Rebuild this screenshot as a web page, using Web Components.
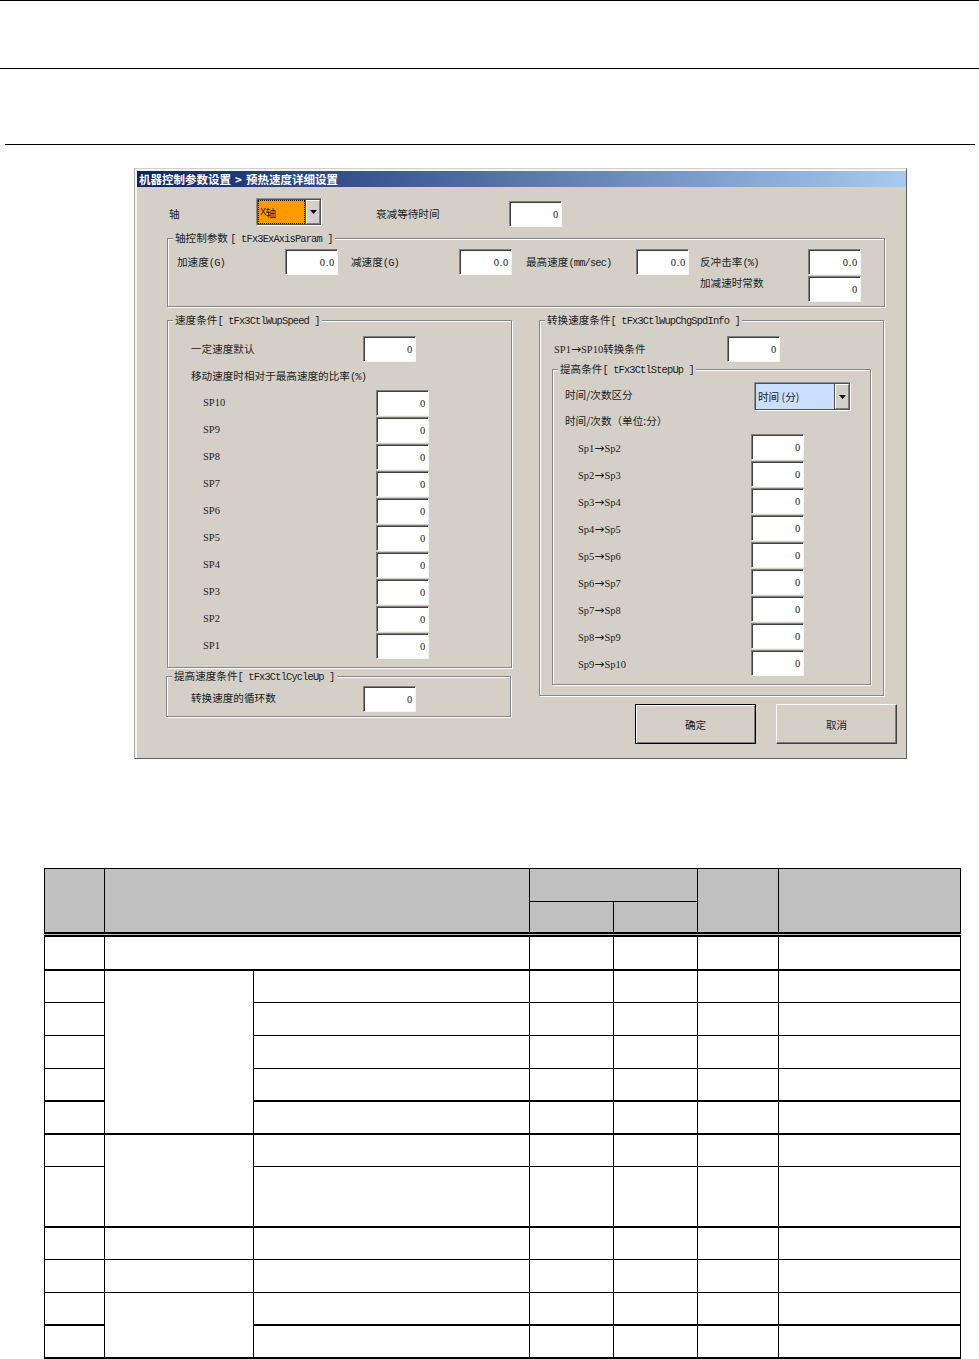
<!DOCTYPE html>
<html lang="zh">
<head>
<meta charset="utf-8">
<title>预热速度详细设置</title>
<style>
    html, body{ margin: 0; padding: 0; background: #fff; }
</style>
</head>
<body>
<manual-page></manual-page>
<script>
class LatText extends HTMLElement{
    constructor(){
        super();
        const shadow = this.attachShadow({ mode: 'open' });
        shadow.innerHTML = `<style>
        :host{ display: inline; font: 10.4px "Liberation Mono", "Noto Sans CJK SC", monospace; letter-spacing: -0.85px; }
        :host([serif]){ font: 10.5px "Liberation Serif", "Noto Sans CJK SC", serif; letter-spacing: 0; }
        :host([arrow]){ font: 12px/1 "DejaVu Sans", sans-serif; letter-spacing: 0; }
        </style><slot></slot>`
    }
}

class NumField extends HTMLElement{
    constructor(){
        super();
        const shadow = this.attachShadow({ mode: 'open' });
        shadow.innerHTML = `
        <style>
        :host{
            display: block;
            box-sizing: border-box;
            flex: none;
            width: 53px;
            height: 26px;
            padding: 7px 2px 0 0;
            background: #fff;
            border: 1px solid;
            border-color: #808080 #f4f4f4 #f4f4f4 #808080;
            box-shadow: inset 1px 1px 0 #404040;
            color: #222;
            text-align: right;
            font: 10.5px/12px "Liberation Serif", serif;
            letter-spacing: 0.7px;
        }
        </style>
        <span id="v"></span>
        `
    }
    connectedCallback(){
        this.shadowRoot.getElementById("v").textContent = this.getAttribute("value") || "0";
    }
}

class NumRow extends HTMLElement{
    constructor(){
        super();
        const shadow = this.attachShadow({ mode: 'open' });
        shadow.innerHTML = `
        <style>
        :host{
            display: flex;
            align-items: center;
            height: 26px;
            margin-bottom: 1px;
        }
        .label{
            flex: none;
            box-sizing: border-box;
            width: var(--label-w, 173px);
            padding-bottom: var(--label-pb, 2px);
        }
        </style>
        <div class="label"><slot></slot></div>
        <num-field></num-field>
        `
    }
    connectedCallback(){
        this.shadowRoot.querySelector("num-field").setAttribute("value", this.getAttribute("value") || "0");
    }
}

class GroupBox extends HTMLElement{
    constructor(){
        super();
        const shadow = this.attachShadow({ mode: 'open' });
        shadow.innerHTML = `
        <style>
        :host{
            display: block;
            position: relative;
            box-sizing: border-box;
            border: 1px solid #858585;
            box-shadow: inset 1px 1px 0 #fff, 1px 1px 0 #fff;
        }
        .legend{
            position: absolute;
            top: -8px;
            left: 5px;
            padding: 0 2px;
            background: #d4d0c8;
            line-height: 13px;
            white-space: nowrap;
        }
        </style>
        <div class="legend"><slot name="legend"></slot></div>
        <slot></slot>
        `
    }
}

class ComboBox extends HTMLElement{
    constructor(){
        super();
        const shadow = this.attachShadow({ mode: 'open' });
        shadow.innerHTML = `
        <style>
        :host{
            display: flex;
            flex: none;
            box-sizing: border-box;
            width: var(--combo-w, 66px);
            height: var(--combo-h, 28px);
            padding: 1px;
            background: #505050;
            border: 1px solid;
            border-color: #909090 #fff #fff #909090;
        }
        .value{
            flex: 1;
            box-sizing: border-box;
            display: flex;
            align-items: center;
            min-width: 0;
            margin-right: 1px;
            padding-left: 1px;
            background: var(--combo-fill, #ff9900);
            border: 1px dotted var(--combo-focus, #000);
            white-space: pre;
        }
        .arrow{
            flex: none;
            box-sizing: border-box;
            display: flex;
            align-items: center;
            justify-content: center;
            width: 14px;
            background: #d4d0c8;
            border: 1px solid;
            border-color: #fff #808080 #808080 #fff;
        }
        svg{ display: block; }
        </style>
        <div class="value"><slot></slot></div>
        <div class="arrow">
            <svg width="7" height="4" viewBox="0 0 7 4"><path d="M0 0h7L3.5 4z" fill="#000"/></svg>
        </div>
        `
    }
}

class WinButton extends HTMLElement{
    constructor(){
        super();
        const shadow = this.attachShadow({ mode: 'open' });
        shadow.innerHTML = `
        <style>
        :host{
            display: flex;
            align-items: center;
            justify-content: center;
            box-sizing: border-box;
            flex: none;
            width: 121px;
            height: 40px;
            background: #d4d0c8;
            border: 1px solid;
            border-color: #fff #404040 #404040 #fff;
            box-shadow: inset -1px -1px 0 #808080;
        }
        :host([primary]){
            border-color: #000;
            box-shadow: inset 1px 1px 0 #fff, inset -1px -1px 0 #808080;
        }
        </style>
        <slot></slot>
        `
    }
}

class SpeedDialog extends HTMLElement{
    constructor(){
        super();
        const shadow = this.attachShadow({ mode: 'open' });
        const spLeft = [10,9,8,7,6,5,4,3,2,1].map(n =>
            `<num-row class="sp up"><lat-text serif>SP${n}</lat-text></num-row>`).join("");
        const spRight = [1,2,3,4,5,6,7,8,9].map(n =>
            `<num-row class="sp"><lat-text serif>Sp${n}</lat-text><lat-text arrow>→</lat-text><lat-text serif>Sp${n+1}</lat-text></num-row>`).join("");
        shadow.innerHTML = `
        <style>
        :host{
            display: block;
            box-sizing: border-box;
            width: 773px;
            height: 591px;
            margin-left: 134px;
            background: #d4d0c8;
            border: 1px solid;
            border-color: #d4d0c8 #606060 #606060 #a9a69f;
            color: #1c1c1c;
            font: 10.6px/13px "Noto Sans CJK SC", sans-serif;
        }
        .frame{
            height: 100%;
            box-sizing: border-box;
            border-top: 2px solid #f6f5f2;
            border-left: 2px solid #f6f5f2;
        }
        .title{
            box-sizing: border-box;
            height: 16px;
            padding-left: 2px;
            background: linear-gradient(90deg, #0a246a, #a6caf0);
            color: #fff;
            font: bold 11.5px/16px "Noto Sans CJK SC", sans-serif;
            word-spacing: 1.5px;
            white-space: nowrap;
        }
        .content{
            padding: 11px 0 0 30px;
            width: 718px;
        }
        .top{
            display: flex;
            align-items: center;
            height: 32px;
            margin-bottom: 8px;
        }
        .top span{ padding-bottom: 2px; }
        .top combo-box{ align-self: flex-start; --combo-w: 66px; }
        .axis{ width: 87px; padding-left: 2px; }
        .wait{ width: 133px; margin-left: 54px; }
        .axis-group{
            display: grid;
            grid-template-columns: 108px 66px 108px 67px 110px 64px 108px 53px;
            grid-auto-rows: 26px;
            row-gap: 1px;
            align-items: center;
            height: 69px;
            padding: 10px 0 0 9px;
        }
        .second-label{ grid-column: 7; align-self: start; }
        .second-field{ grid-column: 8; }
        .lower{
            display: grid;
            grid-template-columns: 345px 345px;
            column-gap: 27px;
            margin-top: 13px;
        }
        .col{ display: flex; flex-direction: column; }
        .speed{
            padding: 15px 0 7px 23px;
            --label-w: 172px;
        }
        .note{ height: 27px; line-height: 25px; white-space: nowrap; }
        .sp{ margin-left: 12px; --label-w: 173px; --label-pb: 0px; }
        .up{ --label-pb: 4px; }
        .cycle{
            margin: 8px 1px 0 -1px;
            padding: 9px 0 3px 24px;
            --label-w: 172px;
            --label-pb: 4px;
        }
        .change{
            padding: 15px 12px 10px 12px;
        }
        .change-first{ margin-left: 2px; --label-w: 173px; }
        .step{
            margin-top: 7px;
            padding: 12px 0 7px 12px;
        }
        .step-mode{ display: flex; align-items: center; height: 29px; }
        .step-mode span{ width: 189px; padding-bottom: 4px; }
        .step-mode combo-box{
            --combo-w: 97px;
            --combo-h: 29px;
            --combo-fill: #c9dffd;
            --combo-focus: #c9dffd;
        }
        .step-note{ height: 18px; line-height: 20px; margin-bottom: 5px; }
        .step .sp{ margin-left: 13px; }
        .buttons{
            display: flex;
            justify-content: flex-end;
            gap: 20px;
            margin: 8px -13px 0 0;
        }
        </style>
        <div class="frame">
            <div class="title">机器控制参数设置 &gt; 预热速度详细设置</div>
            <div class="content">
                <div class="top">
                    <span class="axis">轴</span>
                    <combo-box><lat-text>X</lat-text>轴</combo-box>
                    <span class="wait">衰减等待时间</span>
                    <num-field value="0"></num-field>
                </div>
                <group-box class="axis-group">
                    <span slot="legend">轴控制参数 <lat-text>[ tFx3ExAxisParam ]</lat-text></span>
                    <span>加速度<lat-text>(G)</lat-text></span><num-field value="0.0"></num-field>
                    <span>减速度<lat-text>(G)</lat-text></span><num-field value="0.0"></num-field>
                    <span>最高速度<lat-text>(mm/sec)</lat-text></span><num-field value="0.0"></num-field>
                    <span>反冲击率<lat-text>(%)</lat-text></span><num-field value="0.0"></num-field>
                    <span class="second-label">加减速时常数</span><num-field class="second-field" value="0"></num-field>
                </group-box>
                <div class="lower">
                    <div class="col">
                        <group-box class="speed">
                            <span slot="legend">速度条件<lat-text>[ tFx3CtlWupSpeed ]</lat-text></span>
                            <num-row>一定速度默认</num-row>
                            <div class="note">移动速度时相对于最高速度的比率<lat-text>(%)</lat-text></div>
                            ${spLeft}
                        </group-box>
                        <group-box class="cycle">
                            <span slot="legend">提高速度条件<lat-text>[ tFx3CtlCycleUp ]</lat-text></span>
                            <num-row>转换速度的循环数</num-row>
                        </group-box>
                    </div>
                    <div class="col">
                        <group-box class="change">
                            <span slot="legend">转换速度条件<lat-text>[ tFx3CtlWupChgSpdInfo ]</lat-text></span>
                            <num-row class="change-first"><lat-text serif>SP1</lat-text><lat-text arrow>→</lat-text><lat-text serif>SP10</lat-text>转换条件</num-row>
                            <group-box class="step">
                                <span slot="legend">提高条件<lat-text>[ tFx3CtlStepUp ]</lat-text></span>
                                <div class="step-mode">
                                    <span>时间/次数区分</span>
                                    <combo-box>时间 (分)</combo-box>
                                </div>
                                <div class="step-note">时间/次数（单位:分）</div>
                                ${spRight}
                            </group-box>
                        </group-box>
                        <div class="buttons">
                            <win-button primary>确定</win-button>
                            <win-button>取消</win-button>
                        </div>
                    </div>
                </div>
            </div>
        </div>
        `
    }
}

class SpecTable extends HTMLElement{
    constructor(){
        super();
        const shadow = this.attachShadow({ mode: 'open' });
        const tail = `<td></td><td></td><td></td><td></td>`;
        // rows of the body: height, class of the line under the row, cells before the four value columns
        const rows = [
            [35, "heavy", `<td></td><td colspan="2"></td>`],
            [33, "", `<td></td><td rowspan="5" class="heavyb"></td><td></td>`],
            [33, "", `<td></td><td></td>`],
            [33, "", `<td></td><td></td>`],
            [32, "heavy", `<td></td><td></td>`],
            [33, "heavy", `<td></td><td></td>`],
            [33, "", `<td></td><td rowspan="2" class="heavyb"></td><td></td>`],
            [60, "heavy", `<td></td><td></td>`],
            [33, "", `<td></td><td></td><td></td>`],
            [33, "", `<td></td><td></td><td></td>`],
            [32, "heavy", `<td></td><td rowspan="2" class="heavyb"></td><td></td>`],
            [33, "heavy", `<td></td><td></td>`]
        ].map(r => `<tr class="${r[1]}" style="height:${r[0]}px">${r[2]}${tail}</tr>`).join("");
        shadow.innerHTML = `
        <style>
        :host{
            display: block;
            width: 916px;
            margin: 109px 0 0 44px;
        }
        table{
            width: 916px;
            table-layout: fixed;
            border-collapse: collapse;
        }
        th, td{
            padding: 0;
            border: 1px solid #000;
        }
        th{ background: #c0c0c0; font-weight: normal; }
        thead tr:last-child th, thead th[rowspan]{ border-bottom: 5px double #000; }
        tr.heavy td{ border-bottom: 2px solid #000; }
        td.heavyb{ border-bottom: 2px solid #000; }
        </style>
        <table>
            <colgroup>
                <col style="width:60px"><col style="width:149px"><col style="width:276px">
                <col style="width:84px"><col style="width:84px"><col style="width:81px"><col style="width:182px">
            </colgroup>
            <thead>
                <tr style="height:33px">
                    <th rowspan="2"></th><th rowspan="2" colspan="2"></th><th colspan="2"></th><th rowspan="2"></th><th rowspan="2"></th>
                </tr>
                <tr style="height:33px"><th></th><th></th></tr>
            </thead>
            <tbody>${rows}</tbody>
        </table>
        `
    }
}

class ManualPage extends HTMLElement{
    constructor(){
        super();
        const shadow = this.attachShadow({ mode: 'open' });
        shadow.innerHTML = `
        <style>
        :host{ display: block; width: 979px; height: 1359px; overflow: hidden; }
        .rule{ height: 1px; background: #000; }
        .second{ margin-top: 67px; }
        .third{ margin: 75px 4px 0 5px; }
        speed-dialog{ margin-top: 23px; }
        </style>
        <div class="rule"></div>
        <div class="rule second"></div>
        <div class="rule third"></div>
        <speed-dialog></speed-dialog>
        <spec-table></spec-table>
        `
    }
}

customElements.define("lat-text", LatText);
customElements.define("num-field", NumField);
customElements.define("num-row", NumRow);
customElements.define("group-box", GroupBox);
customElements.define("combo-box", ComboBox);
customElements.define("win-button", WinButton);
customElements.define("speed-dialog", SpeedDialog);
customElements.define("spec-table", SpecTable);
customElements.define("manual-page", ManualPage);
</script>
</body>
</html>
